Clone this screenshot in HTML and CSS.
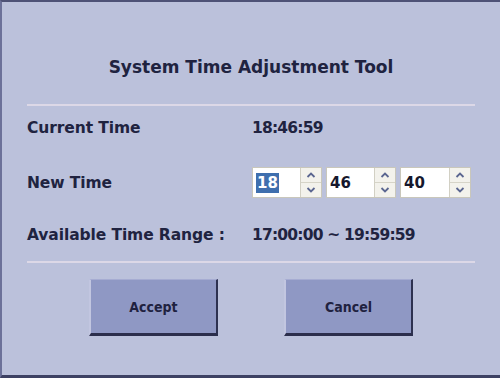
FILE: index.html
```html
<!DOCTYPE html>
<html>
<head>
<meta charset="utf-8">
<link rel="stylesheet" href="styles.css">
</head>
<body>
<div class="dialog">
  <h1 class="title">System Time Adjustment Tool</h1>
  <div class="sep"></div>
  <div class="row row-current">
    <div class="label">Current Time</div>
    <div class="value">18:46:59</div>
  </div>
  <div class="row row-new">
    <div class="label">New Time</div>
    <div class="spins">
      <div class="spin">
        <div class="field"><span class="sel">18</span></div>
        <div class="arrows">
          <div class="arrow"><svg width="10" height="6" viewBox="0 0 10 6"><path d="M1.5 5L5 1.5L8.5 5" fill="none" stroke="#5b6690" stroke-width="1.8"/></svg></div>
          <div class="arrow"><svg width="10" height="6" viewBox="0 0 10 6"><path d="M1.5 1L5 4.5L8.5 1" fill="none" stroke="#5b6690" stroke-width="1.8"/></svg></div>
        </div>
      </div>
      <div class="spin">
        <div class="field">46</div>
        <div class="arrows">
          <div class="arrow"><svg width="10" height="6" viewBox="0 0 10 6"><path d="M1.5 5L5 1.5L8.5 5" fill="none" stroke="#5b6690" stroke-width="1.8"/></svg></div>
          <div class="arrow"><svg width="10" height="6" viewBox="0 0 10 6"><path d="M1.5 1L5 4.5L8.5 1" fill="none" stroke="#5b6690" stroke-width="1.8"/></svg></div>
        </div>
      </div>
      <div class="spin">
        <div class="field">40</div>
        <div class="arrows">
          <div class="arrow"><svg width="10" height="6" viewBox="0 0 10 6"><path d="M1.5 5L5 1.5L8.5 5" fill="none" stroke="#5b6690" stroke-width="1.8"/></svg></div>
          <div class="arrow"><svg width="10" height="6" viewBox="0 0 10 6"><path d="M1.5 1L5 4.5L8.5 1" fill="none" stroke="#5b6690" stroke-width="1.8"/></svg></div>
        </div>
      </div>
    </div>
  </div>
  <div class="row row-range">
    <div class="label">Available Time Range :</div>
    <div class="value">17:00:00 ~ 19:59:59</div>
  </div>
  <div class="sep sep2"></div>
  <div class="buttons">
    <button class="btn">Accept</button>
    <button class="btn">Cancel</button>
  </div>
</div>
</body>
</html>
```
FILE: styles.css
```css
html, body {
  margin: 0;
  padding: 0;
  background: #bbc1db;
}
.dialog {
  box-sizing: border-box;
  width: 500px;
  height: 378px;
  background: #bbc1db;
  border-top: 2px solid #4e5276;
  border-left: 2px solid #6c7199;
  border-bottom: 3px solid #3d4163;
  padding: 0 25px 0 25px;
  display: flex;
  flex-direction: column;
  font-family: "DejaVu Sans", sans-serif;
  color: #202340;
}
.title {
  margin: 55px 0 0 0;
  font-size: 17px;
  line-height: 20px;
  font-weight: bold;
  text-align: center;
}
.sep {
  height: 2px;
  background: #dcd8e7;
  margin-top: 27px;
}
.sep2 {
  margin-top: 6px;
}
.row {
  display: flex;
  align-items: center;
  font-size: 15.5px;
  font-weight: bold;
  line-height: 20px;
}
.label {
  width: 225px;
  letter-spacing: -0.1px;
}
.row-current { height: 44px; }
.row-new { height: 65px; }
.row-range { height: 40px; }
.value {
  letter-spacing: -0.8px;
}
.spins {
  display: flex;
  gap: 4px;
}
.spin {
  box-sizing: border-box;
  width: 70px;
  height: 31px;
  border: 1px solid #c9c7bb;
  background: #fff;
  display: flex;
}
.spin:last-child { width: 71px; }
.field {
  flex: 1;
  display: flex;
  align-items: center;
  padding-left: 3px;
  font-size: 15px;
  font-weight: bold;
  color: #16182c;
}
.sel {
  background: #3f6fae;
  color: #fff;
  padding: 0 1px;
  line-height: 20px;
}
.arrows {
  width: 20px;
  display: flex;
  flex-direction: column;
  border-left: 1px solid #d2d0c4;
  background: #f3f2ec;
}
.arrow {
  flex: 1;
  display: flex;
  align-items: center;
  justify-content: center;
}
.arrow + .arrow {
  border-top: 1px solid #d6d4c8;
}
.buttons {
  display: flex;
  justify-content: center;
  gap: 66px;
  margin-top: 16px;
}
.btn {
  box-sizing: border-box;
  width: 129px;
  height: 57px;
  background: #8f98c4;
  border-style: solid;
  border-width: 1px 2px 3px 2px;
  border-color: #a6acd2 #2d3150 #2b2e4c #c2c6e0;
  font-family: "DejaVu Sans Condensed", "DejaVu Sans", sans-serif;
  font-size: 14px;
  font-weight: bold;
  color: #1f2240;
  padding: 0;
}
```
